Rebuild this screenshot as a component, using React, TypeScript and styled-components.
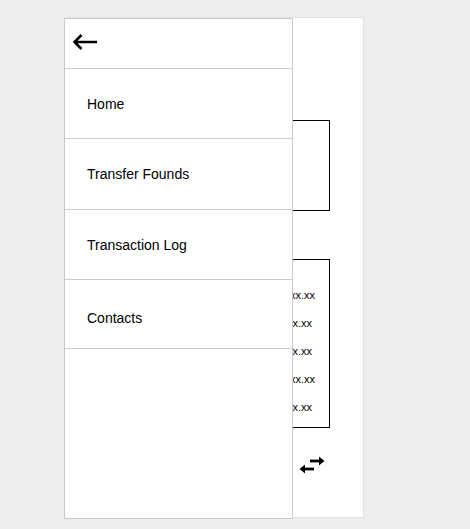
import React from "react";
import styled, { createGlobalStyle } from "styled-components";

const Global = createGlobalStyle`
  html, body { margin: 0; padding: 0; background: #ededed; }
  body { font-family: "Liberation Sans", Arial, sans-serif; }
`;

const Page = styled.div`
  min-height: 529px;
  padding: 17px 0 0 64px;
  box-sizing: border-box;
  background: #ededed;
`;

const Phone = styled.div`
  position: relative;
  width: 300px;
  height: 501px;
  box-sizing: border-box;
  background: #ffffff;
  border: 1px solid #e4e4e4;
  border-right-color: #e0e0e0;
`;

const Screen = styled.div`
  display: flex;
  flex-direction: column;
  padding: 102px 33px 0 33px;
`;

const Card = styled.div<{ $h: number; $mt?: number }>`
  height: ${(p) => p.$h}px;
  margin-top: ${(p) => p.$mt ?? 0}px;
  box-sizing: border-box;
  border: 1px solid #000;
  background: #fff;
`;

const ListCard = styled(Card)`
  display: flex;
  flex-direction: column;
  padding-top: 21px;
`;

const ValueRow = styled.div<{ $pr: number }>`
  height: 28px;
  display: flex;
  align-items: center;
  justify-content: flex-end;
  padding-right: ${(p) => p.$pr}px;
  font-size: 11px;
  color: #000;
`;

const SwapRow = styled.div`
  display: flex;
  justify-content: flex-end;
  margin-top: 27px;
  padding-right: 5px;
`;

const Drawer = styled.nav`
  position: absolute;
  top: 0;
  left: -1px;
  width: 229px;
  height: 501px;
  box-sizing: border-box;
  background: #fff;
  border: 1px solid #c9c9c9;
  display: flex;
  flex-direction: column;
`;

const DrawerHeader = styled.div`
  height: 50px;
  box-sizing: border-box;
  border-bottom: 1px solid #cccccc;
  padding: 14px 0 0 6px;
`;

const MenuItem = styled.div<{ $h: number; $shift?: number }>`
  height: ${(p) => p.$h}px;
  box-sizing: border-box;
  border-bottom: 1px solid #cccccc;
  display: flex;
  align-items: center;
  padding: ${(p) => p.$shift ?? 0}px 0 0 22px;
  font-size: 14px;
  color: #000;
`;

const BackArrow = () => (
  <svg width="28" height="18" viewBox="0 0 28 18">
    <path d="M3.5 9 H26" stroke="#000" strokeWidth="2.5" fill="none" />
    <path
      d="M10.5 2 L3.5 9 L10.5 16"
      stroke="#000"
      strokeWidth="2.5"
      fill="none"
      strokeLinejoin="miter"
    />
  </svg>
);

const SwapIcon = () => (
  <svg width="26" height="20" viewBox="0 0 26 20">
    <path d="M11 6 H21" stroke="#000" strokeWidth="2.8" fill="none" />
    <path d="M25.5 6 L20 1.5 L20 10.5 Z" fill="#000" />
    <path d="M5 14 H15" stroke="#000" strokeWidth="2.8" fill="none" />
    <path d="M0.5 14 L6 9.5 L6 18.5 Z" fill="#000" />
  </svg>
);

const values = [14, 17, 17, 14, 17];

const menu = [
  { label: "Home", h: 70 },
  { label: "Transfer Founds", h: 71 },
  { label: "Transaction Log", h: 70 },
  { label: "Contacts", h: 69, shift: 8 },
];

export default function App() {
  return (
    <>
      <Global />
      <Page>
        <Phone>
          <Screen>
            <Card $h={91} />
            <ListCard $h={169} $mt={48}>
              {values.map((pr, i) => (
                <ValueRow key={i} $pr={pr}>
                  xx.xx
                </ValueRow>
              ))}
            </ListCard>
            <SwapRow>
              <SwapIcon />
            </SwapRow>
          </Screen>
          <Drawer>
            <DrawerHeader>
              <BackArrow />
            </DrawerHeader>
            {menu.map((m) => (
              <MenuItem key={m.label} $h={m.h} $shift={m.shift}>
                {m.label}
              </MenuItem>
            ))}
          </Drawer>
        </Phone>
      </Page>
    </>
  );
}
